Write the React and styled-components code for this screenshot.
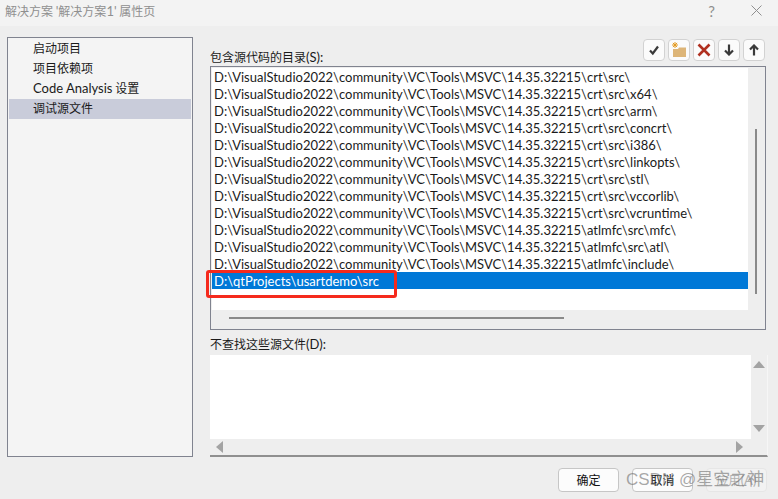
import React from "react";
import styled, { createGlobalStyle } from "styled-components";

const Global = createGlobalStyle`
  html, body { margin: 0; padding: 0; background: #eeeeee; }
  body { font-family: "Noto Sans CJK SC", sans-serif; font-size: 12px; color: #1a1a1a; }
`;

const Dialog = styled.div`
  position: relative;
  width: 778px;
  height: 499px;
  overflow: hidden;
  background: #eeeeee;
`;

const Latin = styled.span`
  font-family: "Lato", sans-serif;
  font-size: 13px;
`;

const TitleBar = styled.div`
  height: 26px;
  box-sizing: border-box;
  background: #f3f3f3;
  display: flex;
  align-items: center;
  padding: 0 16px 5px 5px;
  color: #8f8f8f;
  font-size: 12px;
`;

const Title = styled.div`
  flex: 1;
`;

const Help = styled.span`
  font-family: "Lato", sans-serif;
  font-size: 15px;
  color: #8f8f8f;
  margin-right: 36px;
`;

const Body = styled.div`
  display: flex;
  gap: 17px;
  padding: 11px 10px 0 7px;
  height: 431px;
  box-sizing: border-box;
`;

const Sidebar = styled.div`
  width: 186px;
  height: 420px;
  box-sizing: border-box;
  border: 1px solid #80838f;
  background: #f4f4f4;
  padding: 1px;
`;

const NavItem = styled.div`
  height: 20px;
  line-height: 18px;
  padding-left: 24px;
  background: ${(p) => (p.$active ? "#c9ccda" : "transparent")};
`;

const Main = styled.div`
  flex: 1;
  display: flex;
  flex-direction: column;
`;

const HeadRow = styled.div`
  display: flex;
  justify-content: space-between;
  align-items: flex-end;
  height: 29px;
  padding-right: 3px;
`;

const Label = styled.div`
  line-height: 16px;
`;

const HeadLabel = styled(Label)`
  margin-bottom: 1px;
`;

const Tools = styled.div`
  display: flex;
  gap: 3px;
  margin-bottom: 5px;
`;

const ToolButton = styled.div`
  width: 22px;
  height: 22px;
  box-sizing: border-box;
  border: 1px solid #d2d2d2;
  border-radius: 4px;
  background: #fbfbfb;
  display: flex;
  align-items: center;
  justify-content: center;
`;

const ListBox = styled.div`
  width: 556px;
  height: 264px;
  box-sizing: border-box;
  border: 1px solid #80838f;
  background: #eeeeee;
  padding: 1px;
  display: grid;
  grid-template-columns: 1fr 16px;
  grid-template-rows: 1fr 18px;
`;

const Rows = styled.div`
  background: #fff;
  overflow: hidden;
`;

const Row = styled.div`
  height: 17px;
  line-height: 18px;
  padding-left: 2px;
  font-family: "Lato", sans-serif;
  font-size: 13px;
  white-space: nowrap;
  background: ${(p) => (p.$selected ? "#0078d7" : "transparent")};
  color: ${(p) => (p.$selected ? "#fff" : "#1a1a1a")};
`;

const VTrack = styled.div`
  display: flex;
  justify-content: center;
  padding-top: 61px;
`;

const VThumb = styled.div`
  width: 2px;
  height: 165px;
  background: #8a8a8a;
`;

const HTrack = styled.div`
  padding: 7px 0 0 17px;
`;

const HThumb = styled.div`
  width: 335px;
  height: 2px;
  background: #8a8a8a;
`;

const ExcludeLabel = styled(Label)`
  margin-top: 6px;
  height: 19px;
`;

const ExcludeBox = styled.div`
  width: 558px;
  height: 102px;
  box-sizing: border-box;
  border-right: 1px solid #f6f6f6;
  border-bottom: 2px solid #8f8f8f;
  display: grid;
  grid-template-columns: 1fr 16px;
  grid-template-rows: 1fr 16px;
`;

const Blank = styled.div`
  background: #fff;
`;

const ArrowColumn = styled.div`
  display: flex;
  flex-direction: column;
  justify-content: space-between;
  align-items: center;
  padding: 4px 0 4px;
`;

const ArrowRow = styled.div`
  display: flex;
  justify-content: space-between;
  align-items: center;
  padding: 0 5px;
`;

const Footer = styled.div`
  display: flex;
  justify-content: flex-end;
  gap: 13px;
  padding: 11px 11px 0 0;
`;

const Btn = styled.div`
  width: 61px;
  height: 24px;
  box-sizing: border-box;
  border: 1px solid ${(p) => (p.disabled ? "#e6e6e6" : "#c6c6c6")};
  border-radius: 4px;
  background: ${(p) => (p.disabled ? "#f2f2f2" : "#fcfcfc")};
  color: ${(p) => (p.disabled ? "#b0b0b0" : "#111")};
  text-align: center;
  line-height: 22px;
`;

const RedMark = styled.div`
  position: absolute;
  left: 206px;
  top: 270px;
  width: 191px;
  height: 28px;
  box-sizing: border-box;
  border: 3px solid #f52a1d;
  border-radius: 3px;
`;

const Watermark = styled.div`
  position: absolute;
  left: 626px;
  top: 469px;
  font-family: "Liberation Sans", "Noto Sans CJK SC", sans-serif;
  font-size: 17px;
  line-height: 22px;
  white-space: nowrap;
  color: rgba(110, 110, 110, 0.6);
`;

const base = "D:\\VisualStudio2022\\community\\VC\\Tools\\MSVC\\14.35.32215\\";
const paths = [
  "crt\\src\\",
  "crt\\src\\x64\\",
  "crt\\src\\arm\\",
  "crt\\src\\concrt\\",
  "crt\\src\\i386\\",
  "crt\\src\\linkopts\\",
  "crt\\src\\stl\\",
  "crt\\src\\vccorlib\\",
  "crt\\src\\vcruntime\\",
  "atlmfc\\src\\mfc\\",
  "atlmfc\\src\\atl\\",
  "atlmfc\\include\\",
];

const arrowPoints = {
  up: "0,9 6,2 12,9",
  down: "0,2 12,2 6,9",
  left: "8,0 8,12 1,6",
  right: "2,0 2,12 9,6",
};

const Arrow = ({ dir }) => (
  <svg width="12" height="12" viewBox="0 0 12 12">
    <polygon points={arrowPoints[dir]} fill="#a3a3a3" />
  </svg>
);

const App = () => {
  return (
    <Dialog>
      <Global />
      <TitleBar>
        <Title>
          解决方案 <Latin>'</Latin>解决方案<Latin>1'</Latin> 属性页
        </Title>
        <Help>?</Help>
        <svg width="11" height="11" viewBox="0 0 11 11">
          <path d="M0.5 0.5 L10.5 10.5 M10.5 0.5 L0.5 10.5" stroke="#8f8f8f" strokeWidth="1" fill="none" />
        </svg>
      </TitleBar>
      <Body>
        <Sidebar>
          <NavItem>启动项目</NavItem>
          <NavItem>项目依赖项</NavItem>
          <NavItem>
            <Latin>Code Analysis</Latin> 设置
          </NavItem>
          <NavItem $active>调试源文件</NavItem>
        </Sidebar>
        <Main>
          <HeadRow>
            <HeadLabel>
              包含源代码的目录<Latin>(S):</Latin>
            </HeadLabel>
            <Tools>
              <ToolButton>
                <svg width="12" height="12" viewBox="0 0 12 12">
                  <path d="M2 6.5 L4.8 9.5 L10 2.5" stroke="#3a3a3a" strokeWidth="2.2" fill="none" />
                </svg>
              </ToolButton>
              <ToolButton>
                <svg width="18" height="18" viewBox="0 0 18 18">
                  <path d="M3 8 H8 L9 6.5 H16 V16 H3 Z" fill="#ddb578" />
                  <path d="M5 1 V7 M2 4 H8 M2.9 1.9 L7.1 6.1 M7.1 1.9 L2.9 6.1" stroke="#e39a20" strokeWidth="1" />
                </svg>
              </ToolButton>
              <ToolButton>
                <svg width="14" height="14" viewBox="0 0 14 14">
                  <path d="M1.5 1.5 L12.5 12.5 M12.5 1.5 L1.5 12.5" stroke="#b03020" strokeWidth="2.6" fill="none" />
                </svg>
              </ToolButton>
              <ToolButton>
                <svg width="12" height="12" viewBox="0 0 12 12">
                  <path d="M6 0.5 V10 M2 6.5 L6 10.5 L10 6.5" stroke="#3a3a3a" strokeWidth="2.2" fill="none" />
                </svg>
              </ToolButton>
              <ToolButton>
                <svg width="12" height="12" viewBox="0 0 12 12">
                  <path d="M6 11.5 V2 M2 5.5 L6 1.5 L10 5.5" stroke="#3a3a3a" strokeWidth="2.2" fill="none" />
                </svg>
              </ToolButton>
            </Tools>
          </HeadRow>
          <ListBox>
            <Rows>
              {paths.map((p) => (
                <Row key={p}>{base + p}</Row>
              ))}
              <Row $selected>D:\qtProjects\usartdemo\src</Row>
            </Rows>
            <VTrack>
              <VThumb />
            </VTrack>
            <HTrack>
              <HThumb />
            </HTrack>
          </ListBox>
          <ExcludeLabel>
            不查找这些源文件<Latin>(D):</Latin>
          </ExcludeLabel>
          <ExcludeBox>
            <Blank />
            <ArrowColumn>
              <Arrow dir="up" />
              <Arrow dir="down" />
            </ArrowColumn>
            <ArrowRow>
              <Arrow dir="left" />
              <Arrow dir="right" />
            </ArrowRow>
          </ExcludeBox>
        </Main>
      </Body>
      <Footer>
        <Btn>确定</Btn>
        <Btn>取消</Btn>
        <Btn disabled>
          应用<Latin>(A)</Latin>
        </Btn>
      </Footer>
      <RedMark />
      <Watermark>CSDN @星空之神</Watermark>
    </Dialog>
  );
};

export default App;
